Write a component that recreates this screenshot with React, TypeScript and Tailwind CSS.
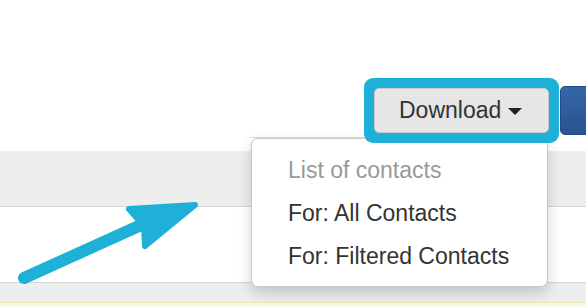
import React from "react";

export default function App() {
  return (
    <div
      className="relative w-[586px] h-[307px] overflow-hidden bg-white"
      style={{ fontFamily: '"Liberation Sans", Arial, sans-serif' }}
    >
      {/* toolbar area */}
      <div className="relative z-10 h-[151px] flex justify-end items-start pt-[78px]">
        <div className="relative flex items-start">
          <div className="absolute left-[-114px] top-[59px] w-[114px] h-px bg-[#d9d9d9]" />
          <div className="bg-[#1eb0d6] rounded-[9px] p-[10px]">
            <div className="w-[175px] h-[45px] bg-[#e6e6e6] border border-[#c9c9c9] rounded-[5px] flex items-center pl-[24px] text-[23px] text-[#333333]">
              <span className="leading-none">Download</span>
              <span className="ml-[7px] mt-[2px] w-0 h-0 border-l-[7px] border-r-[7px] border-t-[7px] border-l-transparent border-r-transparent border-t-[#222]" />
            </div>
          </div>
          <div className="ml-px mt-[8px] w-[40px] h-[49px] rounded-l-[5px] bg-gradient-to-b from-[#3567a8] to-[#2a5290] border border-[#254a82] mr-[-14px]" />
        </div>
      </div>
      {/* gray band */}
      <div className="h-[56px] bg-[#eeeeee] border-b border-[#d5d5d5]" />
      {/* white row */}
      <div className="h-[76px] bg-white border-b border-[#d5d5d5]" />
      {/* gray row */}
      <div className="h-[19px] bg-[#eeeeee]" />
      {/* cream row */}
      <div className="h-[5px] bg-[#fcf8e3] border-t border-[#efe3b8]" />

      {/* dropdown menu */}
      <div className="absolute left-[251px] top-[138px] w-[297px] h-[149px] bg-white border border-[#c8c8c8] rounded-[7px] shadow-[0_6px_14px_rgba(0,0,0,0.18)] pt-[10px] pb-[8px] text-[23px]">
        <div className="pl-[36px] py-[5px] leading-[33px] text-[#999999]">List of contacts</div>
        <div className="pl-[36px] py-[5px] leading-[33px] text-[#333333]">For: All Contacts</div>
        <div className="pl-[36px] py-[5px] leading-[33px] text-[#333333]">For: Filtered Contacts</div>
      </div>

      {/* annotation arrow */}
      <svg className="absolute left-0 top-0" width="586" height="307" viewBox="0 0 586 307">
        <line x1="24" y1="278" x2="150" y2="221" stroke="#1eb0d6" strokeWidth="12" strokeLinecap="round" />
        <polygon
          points="129,209 195,205 145,246 144,226"
          fill="#1eb0d6"
          stroke="#1eb0d6"
          strokeWidth="6"
          strokeLinejoin="round"
        />
      </svg>
    </div>
  );
}
